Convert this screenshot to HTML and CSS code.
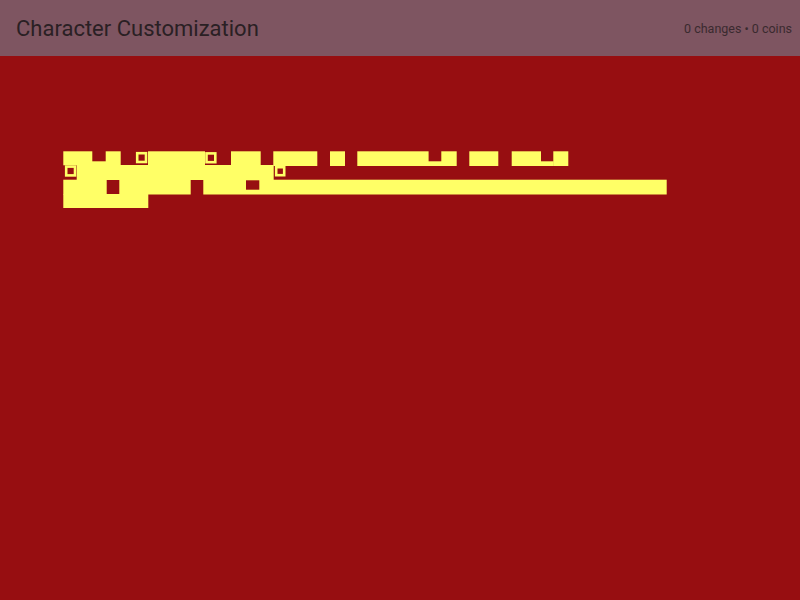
FILE: index.html
```html
<!DOCTYPE html>
<html lang="en">
<head>
<meta charset="utf-8">
<title>Character Customization</title>
<link rel="stylesheet" href="styles.css">
</head>
<body>
<header class="topbar">
  <h1 class="title">Character Customization</h1>
  <div class="stats">0 changes • 0 coins</div>
</header>
<main class="stage">
  <svg class="glyphs" width="620" height="64" viewBox="60 148 620 64" aria-hidden="true">
    <g class="fill">
      <!-- row 1 -->
      <rect x="63.3" y="151.3" width="29" height="14"/>
      <rect x="92" y="161.3" width="14" height="4"/>
      <rect x="105.7" y="151.3" width="15" height="14"/>
      <rect x="148" y="151.3" width="57" height="14"/>
      <rect x="231" y="151.3" width="29.7" height="14"/>
      <rect x="273.3" y="151.3" width="44" height="14.7"/>
      <rect x="330" y="151.3" width="15" height="14.7"/>
      <rect x="357.3" y="151.3" width="71.3" height="14.7"/>
      <rect x="428" y="161.3" width="14" height="4.7"/>
      <rect x="441.3" y="151.3" width="15.4" height="14.7"/>
      <rect x="469.3" y="151.3" width="29" height="14.7"/>
      <rect x="511.7" y="151.3" width="29.3" height="14.7"/>
      <rect x="540.7" y="161.3" width="13" height="4.7"/>
      <rect x="553.3" y="151.3" width="15" height="14.7"/>
      <!-- row 2 -->
      <rect x="76.7" y="165" width="197" height="15"/>
      <!-- row 3 -->
      <rect x="63.3" y="179.7" width="43.4" height="14.8"/>
      <rect x="119.3" y="179.7" width="71.4" height="14.8"/>
      <rect x="203.3" y="179.7" width="463.4" height="14.8"/>
      <!-- row 4 -->
      <rect x="63.3" y="194" width="85" height="14"/>
    </g>
    <g class="hole">
      <rect x="246" y="180.3" width="13.3" height="9.4"/>
    </g>
    <g class="box">
      <rect x="137.2" y="153.2" width="8.8" height="8.8"/>
      <rect x="206.5" y="153.4" width="8.8" height="8.8"/>
      <rect x="66.2" y="166.6" width="8.8" height="8.8"/>
      <rect x="276.2" y="167.2" width="8" height="8"/>
    </g>
  </svg>
</main>
</body>
</html>
```

FILE: styles.css
```css
html, body {
  margin: 0;
  padding: 0;
}

body {
  background: #970e11;
  min-height: 100vh;
  font-family: Roboto, "Noto Sans", "Liberation Sans", sans-serif;
}

.topbar {
  height: 56px;
  box-sizing: border-box;
  background: #7e5561;
  display: flex;
  align-items: center;
  justify-content: space-between;
  padding: 1px 8px 0 16px;
}

.title {
  margin: 0;
  font-size: 22px;
  font-weight: 400;
  color: #2a2024;
  line-height: 1;
}

.stats {
  font-size: 12.5px;
  color: #3a2a2f;
  line-height: 1;
  padding-top: 1px;
}

.stage {
  padding: 92px 0 0 60px;
}

.glyphs {
  display: block;
}

.fill rect {
  fill: #ffff66;
}

.hole rect {
  fill: #970e11;
}

.box rect {
  fill: #970e11;
  stroke: #ffff66;
  stroke-width: 2.6;
}
```
